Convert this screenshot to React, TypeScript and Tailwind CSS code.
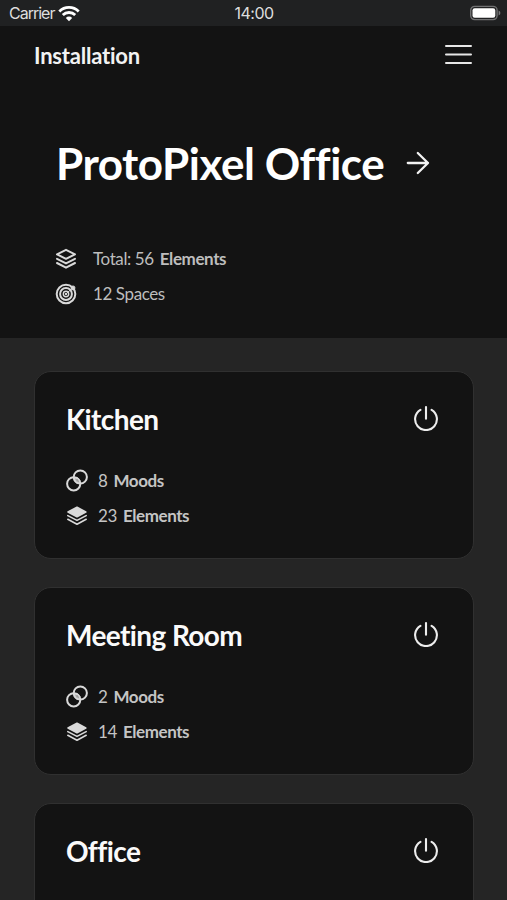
import React from "react";

function StackIcon({ filled = false }: { filled?: boolean }) {
  if (filled) {
    return (
      <svg width="22" height="22" viewBox="0 0 22 22" fill="none" stroke="#d9d9d9" strokeWidth="1.6" strokeLinejoin="round" strokeLinecap="round">
        <path d="M11 2.2 19.8 7 11 11.8 2 7Z" fill="#d9d9d9" />
        <path d="M1.8 10.6 11 15.4 20.2 10.6" />
        <path d="M1.8 14.3 11 19.2 20.2 14.3" />
      </svg>
    );
  }
  return (
    <svg width="22" height="22" viewBox="0 0 22 22" fill="none" stroke="#d9d9d9" strokeWidth="2" strokeLinejoin="round" strokeLinecap="round">
      <path d="M11 1.8 20 6.3 11 10.8 2 6.3Z" />
      <path d="M2 10.8 11 15.4 20 10.8" />
      <path d="M2 15 11 19.7 20 15" />
    </svg>
  );
}

function SpacesIcon() {
  return (
    <svg width="22" height="22" viewBox="0 0 22 22" fill="none" stroke="#d9d9d9">
      <circle cx="11" cy="11" r="9.3" strokeWidth="2" />
      <circle cx="11" cy="11" r="5.9" strokeWidth="2" />
      <circle cx="11" cy="11" r="2.7" strokeWidth="1.4" />
      <path d="M11 11 17.5 5" strokeWidth="1" />
      <circle cx="18" cy="4.9" r="2" fill="#d9d9d9" strokeWidth="0.8" />
      <circle cx="11" cy="11" r="1.2" fill="#d9d9d9" stroke="none" />
    </svg>
  );
}

function MoodsIcon() {
  return (
    <svg width="24" height="24" viewBox="0 0 24 24" fill="none" stroke="#d9d9d9">
      <circle cx="14.3" cy="8" r="6.6" strokeWidth="2" />
      <circle cx="7.7" cy="14.8" r="6.6" strokeWidth="2" />
      <path d="m8.4 8.9 5.4 5.4M10.8 8.4l3.4 3.4M8 11.2l3.4 3.4" strokeWidth="1.1" />
    </svg>
  );
}

function PowerIcon() {
  return (
    <svg className="-translate-y-px" width="26" height="26" viewBox="0 0 26 26" fill="none" stroke="#ededed" strokeWidth="2.1" strokeLinecap="round">
      <path d="M7.4 4.8a10.9 10.9 0 1 0 11.2 0" />
      <path d="M13 2v11.8" />
    </svg>
  );
}

function StatusBar() {
  return (
    <div className="grid h-[26px] shrink-0 grid-cols-3 items-center bg-[#202122] pl-[9px] pr-[6px] font-['Inter','Liberation_Sans',sans-serif] text-[16px] leading-none text-[#dedede]">
      <div className="flex items-center gap-[4px]">
        <span className="w-[45px] whitespace-nowrap tracking-[-1px]">Carrier</span>
        <svg width="22" height="17" viewBox="0 0 22 17" fill="none" stroke="#fff" strokeWidth="2.8">
          <path d="M1.3 6.4a13.8 13.8 0 0 1 19.4 0" />
          <path d="M4.8 10.1a8.7 8.7 0 0 1 12.4 0" />
          <path d="m7.8 12.9a4.6 4.6 0 0 1 6.4 0L11 16.2Z" fill="#fff" stroke="none" />
        </svg>
      </div>
      <span className="-translate-x-px text-center tracking-[-0.5px]">14:00</span>
      <svg className="justify-self-end" width="31" height="16" viewBox="0 0 31 16" fill="none">
        <rect x="0.7" y="1.4" width="26.4" height="13.2" rx="4" stroke="#707172" strokeWidth="1.4" />
        <rect x="2.5" y="3.2" width="22.8" height="9.6" rx="2.2" fill="#fff" />
        <path d="M28.6 5.6v4.8q1.8-.7 1.8-2.4t-1.8-2.4" fill="#77787a" />
      </svg>
    </div>
  );
}

type Counts = { moods: number; elements: number };

function SpaceCard({ name, counts }: { name: string; counts?: Counts }) {
  return (
    <section className="h-[188px] shrink-0 rounded-[17px] border border-[#303030] bg-[#131313] pl-[31px] pr-[30px] pt-[29px]">
      <div className="flex h-[36px] items-center justify-between pr-[4px]">
        <h2 className="text-[28px] font-bold leading-9 tracking-[-0.6px] text-[#fafafa]">{name}</h2>
        <PowerIcon />
      </div>
      {counts && (
        <>
          <div className="mt-[26px] flex h-[35px] items-center gap-[8px] text-[17px] text-[#c4c4c4]">
            <MoodsIcon />
            <span className="flex gap-[6px] tracking-[-0.42px]">
              <span>{counts.moods}</span>
              <b>Moods</b>
            </span>
          </div>
          <div className="flex h-[36px] items-center gap-[10px] text-[17px] text-[#c4c4c4]">
            <StackIcon filled />
            <span className="flex gap-[6px] tracking-[-0.42px]">
              <span>{counts.elements}</span>
              <b>Elements</b>
            </span>
          </div>
        </>
      )}
    </section>
  );
}

export default function App() {
  return (
    <div className="flex h-[900px] w-[507px] flex-col overflow-hidden bg-[#252525] font-['Lato',sans-serif] [font-variant-ligatures:none]">
      <StatusBar />
      <header className="h-[312px] shrink-0 bg-[#131313]">
        <div className="flex h-[58px] items-center justify-between pl-[34px] pr-[34px]">
          <span className="text-[22px] font-bold tracking-[-0.22px] text-[#f2f2f2]">Installation</span>
          <svg width="29" height="22" viewBox="0 0 29 22" stroke="#e8e8e8" strokeWidth="2" strokeLinecap="round">
            <path d="M2 2h25M2 10.5h25M2 19h25" />
          </svg>
        </div>
        <div className="mt-[51px] flex h-[56px] items-center pl-[56px]">
          <h1 className="w-[350px] whitespace-nowrap text-[44px] font-bold leading-none tracking-[-0.46px] text-white">ProtoPixel Office</h1>
          <svg width="24" height="24" viewBox="0 0 24 24" fill="none" stroke="#f2f2f2" strokeWidth="2.3" strokeLinecap="round" strokeLinejoin="round">
            <path d="M1.8 12h20.2M11.8 2 22 12l-10.2 10" />
          </svg>
        </div>
        <div className="mt-[50px] flex flex-col pl-[55px] text-[17px] tracking-[-0.4px] text-[#bdbdbd]">
          <div className="flex h-[35px] items-center gap-[16px]">
            <StackIcon />
            <span className="flex gap-[6px]">
              <span>Total: 56</span>
              <b>Elements</b>
            </span>
          </div>
          <div className="flex h-[35px] items-center gap-[16px]">
            <SpacesIcon />
            <span>12 Spaces</span>
          </div>
        </div>
      </header>
      <main className="flex flex-col gap-[28px] pl-[34px] pr-[33px] pt-[33px]">
        <SpaceCard name="Kitchen" counts={{ moods: 8, elements: 23 }} />
        <SpaceCard name="Meeting Room" counts={{ moods: 2, elements: 14 }} />
        <SpaceCard name="Office" />
      </main>
    </div>
  );
}
